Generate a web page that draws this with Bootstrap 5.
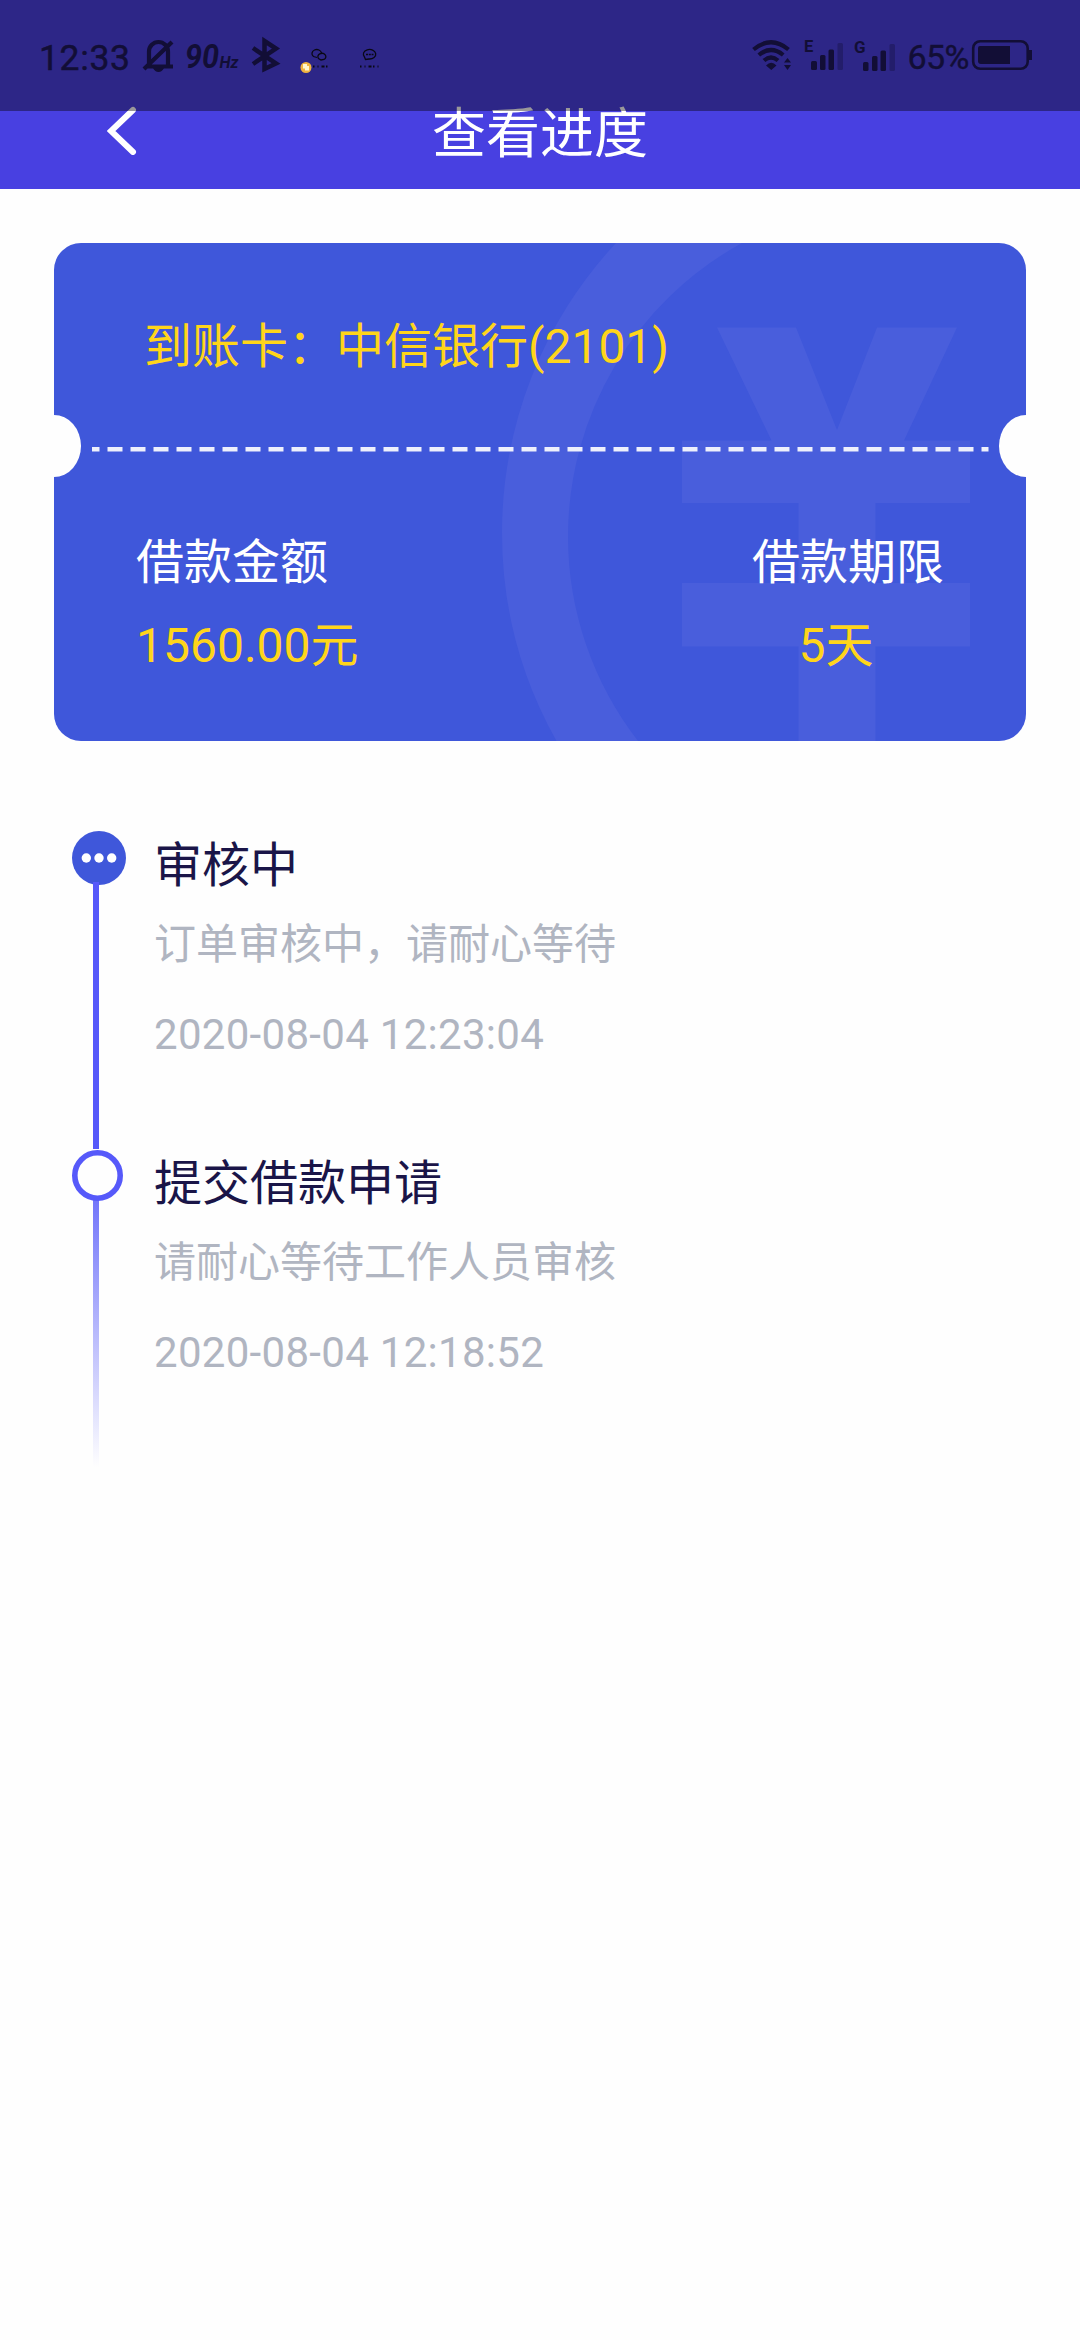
<!DOCTYPE html>
<html lang="zh-CN">
<head>
<meta charset="utf-8">
<meta name="viewport" content="width=device-width, initial-scale=1">
<title>查看进度</title>
<link href="https://cdn.jsdelivr.net/npm/bootstrap@5.3.0/dist/css/bootstrap.min.css" rel="stylesheet">
<style>
body{background:#fefefe;font-family:Roboto,"Noto Sans CJK SC",sans-serif;min-height:2340px;line-height:1}
.app-head{background:#4840e1;height:189px;overflow:hidden}
.status-bar{height:111px;background:rgba(5,0,3,.405);color:#120e36;top:0;left:0;right:0;z-index:3}
.status-bar svg{display:block;width:100%;height:111px}
.title-row{padding:78px 0 0 107px;height:189px}
.title-text{font-size:54px;line-height:113px;padding-right:137px}
.back-icon{margin-top:27px}
.page-body{padding:54px 54px 0}
.ticket{height:498px;background:#3f57da;border-radius:27px;overflow:hidden}
.ticket-art{inset:0}
.gold{color:#ffd51a}
.t48{font-size:48px;line-height:72px}
.ticket-top{padding:68px 0 0 90px;height:204px}
.ticket-info{padding:80px 82px 0 82px}
.ticket-info .gold{margin-top:11px}
.term-value{padding-right:24px}
.progress-list{padding:89px 0 0 17px}
.step{height:318px}
.step-rail{width:56px}
.step-body{padding-left:27px}
.step-name{color:#1a1548;font-size:48px;line-height:72px}
.step-note{color:#b0b5c1;font-size:42px;line-height:63px;margin-top:11px}
.step-time{color:#b0b5c1;font-size:42px;line-height:63px;margin-top:27px;letter-spacing:.3px}
</style>
</head>
<body>
<header class="app-head position-relative">
  <div class="title-row d-flex align-items-start">
    <svg class="back-icon" width="30" height="50" viewBox="0 0 30 50"><path d="M26 5 4 26 26 47" fill="none" stroke="#fff" stroke-width="6" stroke-linecap="round"/></svg>
    <h1 class="title-text flex-grow-1 text-center text-white fw-normal mb-0">查看进度</h1>
  </div>
  <div class="status-bar position-absolute">
    <svg viewBox="0 0 1080 111" fill="#120e36" font-family="Roboto">
      <text x="39" y="69.500" font-size="35.500" textLength="91" stroke="#120e36" stroke-width=".5">12:33</text>
      <path d="M149 66V51.500A9.500 9.500 0 0 1 168 51.500V66M146 66.500H173M144 69 172 42" fill="none" stroke="#120e36" stroke-width="4.200"/>
      <path d="M153 68H164Q162 72 158.500 72T153 68"/>
      <text x="185" y="67.500" font-size="33" font-weight="700" font-style="italic" textLength="34" lengthAdjust="spacingAndGlyphs">90</text>
      <text x="219.500" y="67.500" font-size="17" font-weight="700" font-style="italic" textLength="19" lengthAdjust="spacingAndGlyphs">Hz</text>
      <path d="M253 48 276 63.500 264.500 69V41L276 48.500 253 64" fill="none" stroke="#120e36" stroke-width="4.500"/>
      <g fill="none" stroke="#090814" stroke-width="1.300">
        <path d="M317 57.500 313.500 56.500A4.800 4 0 1 1 321.500 53"/><path d="M324 59.500A4 3.300 0 1 0 318.500 58.500L321 60Z"/>
        <path d="M365.500 59.500 364.500 57A6.200 4.800 0 1 1 369 59Z"/><path d="M366 54.500H373.500" stroke-dasharray="2 .8"/>
        <path d="M313 66.500H329M360 66.500H380" stroke-width="2" stroke-dasharray="1.500 3 1 3 3 1.500"/>
      </g>
      <circle cx="306" cy="67.500" r="5.500" fill="#efb340"/><path d="M303 64H307V66H309V70.500H305V68.500H303Z" fill="#fff6cf"/>
      <g fill="none" stroke="#120e36" stroke-width="4.200">
        <path d="M753.500 49.500Q771 35 788.500 49.500M758.800 55Q771 45 783.200 55M764 60.500Q771 54.500 778 60.500"/>
      </g>
      <path d="M771.300 70 766 65.500Q771.300 60 776.500 65.500ZM787.500 58 791 62.500H784ZM784 65H791L787.500 70Z"/>
      <text x="804" y="51.500" font-size="16.500" font-weight="700">E</text>
      <rect x="811" y="61" width="6" height="9" rx="1.500"/><rect x="820" y="55" width="5.500" height="15" rx="1.500"/><rect x="828.500" y="49.500" width="5.500" height="20.500" rx="1.500"/><rect x="837.500" y="43" width="5.500" height="27" rx="1.500" opacity=".35"/>
      <text x="854" y="52.500" font-size="17" font-weight="700">G</text>
      <rect x="863" y="62" width="5.500" height="9" rx="1.500"/><rect x="872" y="56" width="5.500" height="15" rx="1.500"/><rect x="880.500" y="50.500" width="5.500" height="20.500" rx="1.500"/><rect x="889.500" y="44" width="5.500" height="27" rx="1.500" opacity=".35"/>
      <text x="907.500" y="68.500" font-size="34" textLength="62" stroke="#120e36" stroke-width=".4">65%</text>
      <rect x="973.200" y="41.200" width="54.500" height="27.600" rx="7" fill="none" stroke="#120e36" stroke-width="2.600"/>
      <path d="M980 46H1010V64H981Q978 64 978 61V48Q978 46 980 46ZM1028.500 50H1032V60H1028.500Z"/>
    </svg>
  </div>
</header>

<main class="page-body">
  <section class="ticket position-relative text-white">
    <svg class="ticket-art position-absolute" width="972" height="498" viewBox="54 243 972 498">
      <path fill="#495edc" fill-rule="evenodd" d="M502 533A425 425 0 0 1 616 243H742A335 335 0 0 0 568 537 335 335 0 0 0 638 741H556.500A425 425 0 0 1 502 533Z"/>
      <path fill="#495edc" d="M717 327.500H796L837 430 877 327.500H957L904 440.500H970V503H875.500V583H970V646.500H875.500V741H798.500V646.500H682V583H798.500V503H682V440.500H771.500Z"/>
      <path d="M92 449.200H988.500" stroke="#eef0fc" stroke-width="4.400" stroke-dasharray="15 8" stroke-dashoffset="7.500"/>
      <ellipse cx="54" cy="446" rx="27" ry="31" fill="#fefefe"/><ellipse cx="1026" cy="446" rx="27" ry="31" fill="#fefefe"/>
    </svg>
    <div class="ticket-top position-relative t48 gold">到账卡：中信银行(2101)</div>
    <div class="ticket-info position-relative d-flex justify-content-between t48">
      <div><div>借款金额</div><div class="gold">1560.00元</div></div>
      <div class="text-center"><div>借款期限</div><div class="gold term-value">5天</div></div>
    </div>
  </section>

  <section class="progress-list">
    <div class="step d-flex">
      <svg class="step-rail" height="318" viewBox="71 830 56 318">
        <circle cx="99" cy="858" r="27" fill="#3f57da"/><g fill="#fff"><circle cx="86.300" cy="858" r="4.700"/><circle cx="99" cy="858" r="4.700"/><circle cx="111.700" cy="858" r="4.700"/></g>
        <path d="M93 882H99V1148H93Z" fill="#5659fa"/>
      </svg>
      <div class="step-body">
        <div class="step-name">审核中</div>
        <div class="step-note">订单审核中，请耐心等待</div>
        <div class="step-time">2020-08-04 12:23:04</div>
      </div>
    </div>
    <div class="step d-flex">
      <svg class="step-rail" height="320" viewBox="71 1148 56 320">
        <defs><linearGradient id="fade" x1="0" y1="0" x2="0" y2="1"><stop stop-color="#7275fa"/><stop offset="1" stop-color="#fefefe"/></linearGradient></defs>
        <path d="M93 1148H99V1149H93Z" fill="#5659fa"/>
        <path d="M93 1199H99V1467H93Z" fill="url(#fade)"/>
        <circle cx="97.500" cy="1175.500" r="22.700" fill="#fefefe" stroke="#5659fa" stroke-width="5.600"/>
      </svg>
      <div class="step-body">
        <div class="step-name">提交借款申请</div>
        <div class="step-note">请耐心等待工作人员审核</div>
        <div class="step-time">2020-08-04 12:18:52</div>
      </div>
    </div>
  </section>
</main>
<script src="https://cdn.jsdelivr.net/npm/bootstrap@5.3.0/dist/js/bootstrap.bundle.min.js"></script>
</body>
</html>
